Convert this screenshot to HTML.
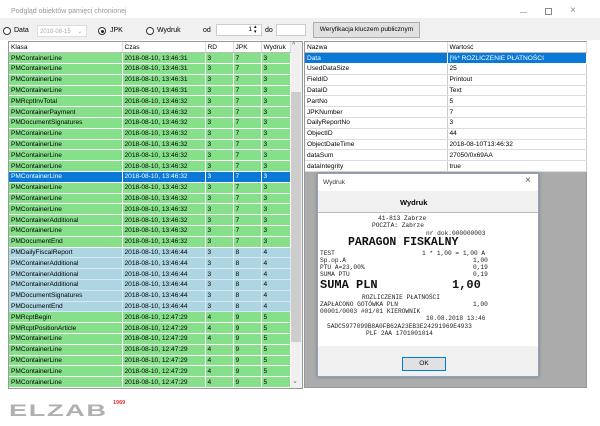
<!DOCTYPE html>
<html><head><meta charset="utf-8"><style>
*{margin:0;padding:0;box-sizing:border-box}
body{width:600px;height:426px;background:#fff;font-family:"Liberation Sans",sans-serif;position:relative;overflow:hidden;font-size:7px;color:#000}
.a{position:absolute;white-space:nowrap}
.tb{position:absolute;left:0;top:18px;width:600px;height:22px;background:#f0f0f0}
table{border-collapse:collapse;position:absolute;table-layout:fixed}
td{height:10.8px;font-size:6.6px;padding:0 0 0 2px;border-right:1px solid #fff;border-bottom:1px solid #fff;white-space:nowrap;overflow:hidden;line-height:9px}
tr{height:10.8px}
.g td{background:#86e08a}
.b td{background:#aed6e2;border-color:#d8e8f0}
.s td{background:#0a78d7;color:#fff}
.h td{background:#fff;border-right:1px solid #ddd;border-bottom:1px solid #bbb}
.r td{background:#fff;border-right:1px solid #ccc;border-bottom:1px solid #ddd}
.m{font-family:"Liberation Mono",monospace;font-size:6.2px;color:#222;position:absolute;white-space:pre}
</style></head><body>
<div class="a" style="left:11px;top:8px;font-size:7px;color:#999">Podgląd obiektów pamięci chronionej</div>
<div class="a" style="left:520px;top:12px;width:7px;height:1px;background:#bbb"></div>
<div class="a" style="left:545px;top:8px;width:7px;height:7px;border:1px solid #888"></div>
<div class="a" style="left:570px;top:5px;font-size:10px;color:#888">×</div>
<div class="tb"></div>
<div class="a" style="left:3px;top:27px;width:8px;height:8px;border:1px solid #333;border-radius:50%;background:#fff"></div>
<div class="a" style="left:14px;top:27px;font-size:7px">Data</div>
<div class="a" style="left:37px;top:25px;width:50px;height:12px;background:#fff;border:1px solid #ddd;color:#aaa;font-size:6px;padding:2px 2px">2018-08-15 &nbsp; &nbsp;⌄</div>
<div class="a" style="left:98px;top:27px;width:8px;height:8px;border:1px solid #333;border-radius:50%;background:#fff"><div style="margin:1.5px;width:3px;height:3px;border-radius:50%;background:#222"></div></div>
<div class="a" style="left:110px;top:27px;font-size:7px">JPK</div>
<div class="a" style="left:146px;top:27px;width:8px;height:8px;border:1px solid #333;border-radius:50%;background:#fff"></div>
<div class="a" style="left:157px;top:27px;font-size:7px">Wydruk</div>
<div class="a" style="left:203px;top:27px;font-size:7px">od</div>
<div class="a" style="left:216px;top:24px;width:46px;height:12px;background:#fff;border:1px solid #ccc;font-size:6.5px;text-align:right;padding:1px 9px 0 0">1</div>
<div class="a" style="left:254px;top:25px;font-size:5px;line-height:5px">▴<br>▾</div>
<div class="a" style="left:265px;top:27px;font-size:7px">do</div>
<div class="a" style="left:276px;top:24px;width:30px;height:12px;background:#fff;border:1px solid #ccc"></div>
<div class="a" style="left:313px;top:22px;width:107px;height:16px;background:#e1e1e1;border:1px solid #adadad;font-size:6.5px;text-align:center;line-height:14px">Weryfikacja kluczem publicznym</div>

<div class="a" style="left:8px;top:41px;width:295px;height:348px;border:1px solid #999;background:#fff"></div>
<div class="a" style="left:290px;top:42px;width:12px;height:346px;background:#f0f0f0"></div>
<div class="a" style="left:291px;top:92px;width:10px;height:250px;background:#cdcdcd"></div>
<div class="a" style="left:292px;top:42px;font-size:7px;color:#666">^</div>
<div class="a" style="left:292px;top:377px;font-size:7px;color:#666">⌄</div>
<table style="left:9px;top:42px;width:281px">
<colgroup><col style="width:113px"><col style="width:83px"><col style="width:28px"><col style="width:28px"><col style="width:29px"></colgroup>
<tr class="h"><td>Klasa</td><td>Czas</td><td>RD</td><td>JPK</td><td>Wydruk</td></tr>
<tr class="g"><td>PMContainerLine</td><td>2018-08-10, 13:46:31</td><td>3</td><td>7</td><td>3</td></tr>
<tr class="g"><td>PMContainerLine</td><td>2018-08-10, 13:46:31</td><td>3</td><td>7</td><td>3</td></tr>
<tr class="g"><td>PMContainerLine</td><td>2018-08-10, 13:46:31</td><td>3</td><td>7</td><td>3</td></tr>
<tr class="g"><td>PMContainerLine</td><td>2018-08-10, 13:46:31</td><td>3</td><td>7</td><td>3</td></tr>
<tr class="g"><td>PMRcptInvTotal</td><td>2018-08-10, 13:46:32</td><td>3</td><td>7</td><td>3</td></tr>
<tr class="g"><td>PMContainerPayment</td><td>2018-08-10, 13:46:32</td><td>3</td><td>7</td><td>3</td></tr>
<tr class="g"><td>PMDocumentSignatures</td><td>2018-08-10, 13:46:32</td><td>3</td><td>7</td><td>3</td></tr>
<tr class="g"><td>PMContainerLine</td><td>2018-08-10, 13:46:32</td><td>3</td><td>7</td><td>3</td></tr>
<tr class="g"><td>PMContainerLine</td><td>2018-08-10, 13:46:32</td><td>3</td><td>7</td><td>3</td></tr>
<tr class="g"><td>PMContainerLine</td><td>2018-08-10, 13:46:32</td><td>3</td><td>7</td><td>3</td></tr>
<tr class="g"><td>PMContainerLine</td><td>2018-08-10, 13:46:32</td><td>3</td><td>7</td><td>3</td></tr>
<tr class="s"><td>PMContainerLine</td><td>2018-08-10, 13:46:32</td><td>3</td><td>7</td><td>3</td></tr>
<tr class="g"><td>PMContainerLine</td><td>2018-08-10, 13:46:32</td><td>3</td><td>7</td><td>3</td></tr>
<tr class="g"><td>PMContainerLine</td><td>2018-08-10, 13:46:32</td><td>3</td><td>7</td><td>3</td></tr>
<tr class="g"><td>PMContainerLine</td><td>2018-08-10, 13:46:32</td><td>3</td><td>7</td><td>3</td></tr>
<tr class="g"><td>PMContainerAdditional</td><td>2018-08-10, 13:46:32</td><td>3</td><td>7</td><td>3</td></tr>
<tr class="g"><td>PMContainerLine</td><td>2018-08-10, 13:46:32</td><td>3</td><td>7</td><td>3</td></tr>
<tr class="g"><td>PMDocumentEnd</td><td>2018-08-10, 13:46:32</td><td>3</td><td>7</td><td>3</td></tr>
<tr class="b"><td>PMDailyFiscalReport</td><td>2018-08-10, 13:46:44</td><td>3</td><td>8</td><td>4</td></tr>
<tr class="b"><td>PMContainerAdditional</td><td>2018-08-10, 13:46:44</td><td>3</td><td>8</td><td>4</td></tr>
<tr class="b"><td>PMContainerAdditional</td><td>2018-08-10, 13:46:44</td><td>3</td><td>8</td><td>4</td></tr>
<tr class="b"><td>PMContainerAdditional</td><td>2018-08-10, 13:46:44</td><td>3</td><td>8</td><td>4</td></tr>
<tr class="b"><td>PMDocumentSignatures</td><td>2018-08-10, 13:46:44</td><td>3</td><td>8</td><td>4</td></tr>
<tr class="b"><td>PMDocumentEnd</td><td>2018-08-10, 13:46:44</td><td>3</td><td>8</td><td>4</td></tr>
<tr class="g"><td>PMRcptBegin</td><td>2018-08-10, 12:47:29</td><td>4</td><td>9</td><td>5</td></tr>
<tr class="g"><td>PMRcptPositionArticle</td><td>2018-08-10, 12:47:29</td><td>4</td><td>9</td><td>5</td></tr>
<tr class="g"><td>PMContainerLine</td><td>2018-08-10, 12:47:29</td><td>4</td><td>9</td><td>5</td></tr>
<tr class="g"><td>PMContainerLine</td><td>2018-08-10, 12:47:29</td><td>4</td><td>9</td><td>5</td></tr>
<tr class="g"><td>PMContainerLine</td><td>2018-08-10, 12:47:29</td><td>4</td><td>9</td><td>5</td></tr>
<tr class="g"><td>PMContainerLine</td><td>2018-08-10, 12:47:29</td><td>4</td><td>9</td><td>5</td></tr>
<tr class="g"><td>PMContainerLine</td><td>2018-08-10, 12:47:29</td><td>4</td><td>9</td><td>5</td></tr>
</table>

<div class="a" style="left:304px;top:41px;width:283px;height:347px;border:1px solid #999;background:#ababab"></div>
<table style="left:305px;top:42px;width:281px">
<colgroup><col style="width:142px"><col style="width:139px"></colgroup>
<tr class="h"><td>Nazwa</td><td>Wartość</td></tr>
<tr class="s"><td>Data</td><td>[%* ROZLICZENIE PŁATNOŚCI</td></tr>
<tr class="r"><td>UsedDataSize</td><td>25</td></tr>
<tr class="r"><td>FieldID</td><td>Printout</td></tr>
<tr class="r"><td>DataID</td><td>Text</td></tr>
<tr class="r"><td>PartNo</td><td>5</td></tr>
<tr class="r"><td>JPKNumber</td><td>7</td></tr>
<tr class="r"><td>DailyReportNo</td><td>3</td></tr>
<tr class="r"><td>ObjectID</td><td>44</td></tr>
<tr class="r"><td>ObjectDateTime</td><td>2018-08-10T13:46:32</td></tr>
<tr class="r"><td>dataSum</td><td>27050/0x69AA</td></tr>
<tr class="r"><td>dataIntegrity</td><td>true</td></tr>
</table>

<div class="a" style="left:317px;top:173px;width:222px;height:204px;border:1px solid #8aa4c8;background:#f0f0f0;box-shadow:0 0 3px rgba(0,0,0,.3)"></div>
<div class="a" style="left:318px;top:174px;width:220px;height:17px;background:#fff"></div>
<div class="a" style="left:323px;top:179px;font-size:6.5px;color:#333">Wydruk</div>
<div class="a" style="left:525px;top:175px;font-size:10px;color:#555">×</div>
<div class="a" style="left:318px;top:212px;width:220px;height:1px;background:#bbb"></div>
<div class="a" style="left:400px;top:198px;font-size:7.5px;font-weight:bold">Wydruk</div>
<div class="a" style="left:318px;top:213px;width:220px;height:133px;background:#fff"></div>
<div class="m" style="left:378px;top:215px">41-813 Zabrze</div>
<div class="m" style="left:372px;top:222px">POCZTA: Zabrze</div>
<div class="m" style="left:426px;top:230px">nr dok.000000003</div>
<div class="m" style="left:348px;top:236px;font-size:11.5px;font-weight:bold;color:#111">PARAGON FISKALNY</div>
<div class="m" style="left:320px;top:250px">TEST</div>
<div class="m" style="left:422px;top:250px">1 * 1,00 = 1,00 A</div>
<div class="m" style="left:320px;top:257px">Sp.op.A</div><div class="m" style="left:473px;top:257px">1,00</div>
<div class="m" style="left:320px;top:264px">PTU A=23,00%</div><div class="m" style="left:473px;top:264px">0,19</div>
<div class="m" style="left:320px;top:271px">SUMA PTU</div><div class="m" style="left:473px;top:271px">0,19</div>
<div class="m" style="left:320px;top:278px;font-size:12px;font-weight:bold;color:#111">SUMA PLN</div>
<div class="m" style="left:452px;top:278px;font-size:12px;font-weight:bold;color:#111">1,00</div>
<div class="m" style="left:362px;top:294px">ROZLICZENIE PŁATNOŚCI</div>
<div class="m" style="left:320px;top:301px">ZAPŁACONO GOTÓWKA PLN</div><div class="m" style="left:473px;top:301px">1,00</div>
<div class="m" style="left:320px;top:308px">00001/0003 #01/01 KIEROWNIK</div>
<div class="m" style="left:426px;top:315px">10.08.2018 13:46</div>
<div class="m" style="left:327px;top:323px">5ADC5977099B8A0FB62A23EB3E24291969E4933</div>
<div class="m" style="left:366px;top:330px">PLF 2AA 1701001014</div>
<div class="a" style="left:402px;top:357px;width:44px;height:14px;background:#e1e1e1;border:1px solid #0078d7;font-size:6.5px;text-align:center;line-height:12px">OK</div>

<div class="a" style="left:9px;top:401px;font-size:17px;font-weight:bold;letter-spacing:1px;color:#b0b0b0;transform:scaleX(1.6);transform-origin:left">ELZAB</div>
<div class="a" style="left:113px;top:400px;font-size:5.5px;font-weight:bold;color:#d33">1969</div>
</body></html>
